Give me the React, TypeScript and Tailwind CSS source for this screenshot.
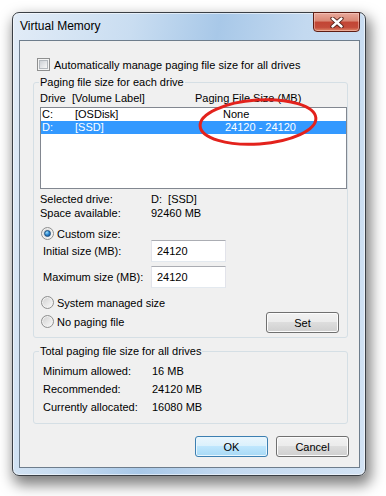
import type { ReactNode } from 'react';

// ---------------------------------------------------------------------------
// Win7 style controls
// ---------------------------------------------------------------------------

function Checkbox() {
  return (
    <span className="flex h-[13px] w-[13px] shrink-0 items-center justify-center border border-[#8e8f8f] bg-[#f4f4f4] p-[1px]">
      <span className="h-full w-full border border-[#b4b9be] bg-[linear-gradient(135deg,#cdd1d6,#f7f7f7)]" />
    </span>
  );
}

function Radio({ checked = false }: { checked?: boolean }) {
  return (
    <span className="flex h-[13px] w-[13px] shrink-0 items-center justify-center rounded-full border border-[#8e8f8f] bg-[linear-gradient(135deg,#cfcfcf,#fbfbfb)] shadow-[inset_0_0_0_1px_#f2f2f2]">
      {checked && (
        <span className="h-[7px] w-[7px] rounded-full border border-[#1b4e7e] bg-[radial-gradient(circle_at_35%_30%,#9ee0fb,#2a86d2_50%,#0f4a8a)]" />
      )}
    </span>
  );
}

function Button({ children, primary = false }: { children: ReactNode; primary?: boolean }) {
  return (
    <button
      type="button"
      className={
        primary
          ? 'flex h-[21px] w-[73px] items-center justify-center rounded-[3px] border border-[#3c7fb1] bg-[linear-gradient(#eaf6fd,#d9f0fc_50%,#bee6fd_50%,#a7d9f5)] text-[11px] text-black shadow-[inset_0_0_0_1px_#e8f6fe]'
          : 'flex h-[21px] w-[73px] items-center justify-center rounded-[3px] border border-[#707070] bg-[linear-gradient(#f2f2f2,#ebebeb_50%,#dddddd_50%,#cfcfcf)] text-[11px] text-black shadow-[inset_0_0_0_1px_#fcfcfc]'
      }
    >
      {children}
    </button>
  );
}

function Field({ value }: { value: string }) {
  return (
    <div className="flex h-[22px] w-[75px] items-center border border-[#e2e3ea] border-t-[#abadb3] border-b-[#e3e9ef] bg-white pl-[5px]">
      {value}
    </div>
  );
}

function GroupLabel({ children }: { children: ReactNode }) {
  return (
    <span className="absolute -top-[8px] left-[5px] bg-[#f0f0f0] px-[1px] leading-[14px]">
      {children}
    </span>
  );
}

// ---------------------------------------------------------------------------
// Dialog
// ---------------------------------------------------------------------------

export default function App() {
  return (
    <div className="relative h-[496px] w-[386px] overflow-hidden bg-white pl-[12px] pt-[12px] font-['Liberation_Sans',Arial,sans-serif] text-[11px] leading-[14px] text-black">
      <div className="flex h-[464px] w-[354px] flex-col rounded-[7px] border border-[#3a3f45] bg-[linear-gradient(100deg,#e2ecf7_0%,#c9ddf1_28%,#a8c8e8_48%,#c3d9f0_68%,#d3e3f4_100%)] shadow-[3px_7px_14px_2px_rgba(0,0,0,0.5),inset_0_0_0_1px_rgba(255,255,255,0.55)]">
        {/* Title bar */}
        <div className="flex h-[27px] shrink-0 items-start justify-between">
          <span className="pl-[7px] pt-[6px] text-[12px] leading-[15px]">Virtual Memory</span>
          <div className="-mt-[1px] mr-[5px] flex h-[20px] w-[47px] items-center justify-center rounded-b-[4px] border border-[#5e1d14] bg-[linear-gradient(#e9a99c,#d98774_45%,#c24534_50%,#c44c3b_80%,#e08a6a)] shadow-[inset_0_0_0_1px_rgba(255,220,210,0.45)]">
            <svg width="14" height="11" viewBox="0 0 14 11">
              <path d="M2.5 1.5 L11.5 9.5 M11.5 1.5 L2.5 9.5" stroke="#4a1a12" strokeWidth="4.2" strokeLinecap="round" />
              <path d="M2.5 1.5 L11.5 9.5 M11.5 1.5 L2.5 9.5" stroke="#ffffff" strokeWidth="2.4" strokeLinecap="round" />
            </svg>
          </div>
        </div>

        {/* Client area */}
        <div className="mb-[7px] ml-[6px] mr-[5px] flex flex-1 flex-col border border-[#6e7d8c] bg-[#f0f0f0]">
          <label className="ml-[17px] mt-[17px] flex h-[13px] items-center gap-[4px]">
            <Checkbox />
            <span>Automatically manage paging file size for all drives</span>
          </label>

          {/* Paging file size for each drive */}
          <div className="relative ml-[13px] mt-[11px] h-[256px] w-[315px] rounded-[3px] border border-[#d5dfe5] pl-[6px]">
            <GroupLabel>Paging file size for each drive</GroupLabel>

            <div className="mt-[8px] flex h-[14px]">
              <span className="w-[32px]">Drive</span>
              <span className="w-[123px]">[Volume Label]</span>
              <span>Paging File Size (MB)</span>
            </div>

            <div className="mt-[2px] h-[82px] w-[307px] border border-[#828790] bg-white">
              <div className="flex h-[13px] items-center pl-[1px] leading-[13px]">
                <span className="w-[33px]">C:</span>
                <span className="w-[148px]">[OSDisk]</span>
                <span>None</span>
              </div>
              <div className="flex h-[13px] items-center bg-[#3399ff] pl-[1px] leading-[13px] text-white">
                <span className="w-[33px]">D:</span>
                <span className="w-[150px]">[SSD]</span>
                <span>24120 - 24120</span>
              </div>
            </div>

            <div className="mt-[3px] flex h-[14px]">
              <span className="w-[111px]">Selected drive:</span>
              <span>D:&nbsp;&nbsp;[SSD]</span>
            </div>
            <div className="flex h-[14px]">
              <span className="w-[111px]">Space available:</span>
              <span>92460 MB</span>
            </div>

            <label className="mt-[7px] flex h-[13px] items-center gap-[3px] pl-[1px]">
              <Radio checked />
              <span>Custom size:</span>
            </label>

            <div className="flex h-[22px] items-center">
              <span className="w-[111px] pl-[3px]">Initial size (MB):</span>
              <Field value="24120" />
            </div>
            <div className="mt-[4px] flex h-[22px] items-center">
              <span className="w-[111px] pl-[3px]">Maximum size (MB):</span>
              <Field value="24120" />
            </div>

            <label className="mt-[8px] flex h-[13px] items-center gap-[3px] pl-[1px]">
              <Radio />
              <span>System managed size</span>
            </label>

            <div className="mt-[3px] flex h-[21px] w-[299px] items-start justify-between">
              <label className="mt-[3px] flex h-[13px] items-center gap-[3px] pl-[1px]">
                <Radio />
                <span>No paging file</span>
              </label>
              <Button>Set</Button>
            </div>
          </div>

          {/* Total paging file size for all drives */}
          <div className="relative ml-[13px] mt-[13px] h-[73px] w-[315px] rounded-[3px] border border-[#d5dfe5] pl-[9px] pt-[12px]">
            <GroupLabel>Total paging file size for all drives</GroupLabel>
            {[
              ['Minimum allowed:', '16 MB'],
              ['Recommended:', '24120 MB'],
              ['Currently allocated:', '16080 MB'],
            ].map(([label, value], i) => (
              <div key={label} className={i === 0 ? 'flex h-[14px]' : 'mt-[4px] flex h-[14px]'}>
                <span className="w-[109px]">{label}</span>
                <span>{value}</span>
              </div>
            ))}
          </div>

          <div className="ml-[175px] mt-[12px] flex gap-[8px]">
            <Button primary>OK</Button>
            <Button>Cancel</Button>
          </div>
        </div>
      </div>

      {/* Red annotation ring */}
      <svg
        className="pointer-events-none absolute left-[195px] top-[96px]"
        width="126"
        height="54"
        viewBox="0 0 126 54"
      >
        <ellipse
          cx="63"
          cy="26"
          rx="58"
          ry="22"
          transform="rotate(-4 63 26)"
          fill="none"
          stroke="#e3221c"
          strokeWidth="3"
        />
      </svg>
    </div>
  );
}
